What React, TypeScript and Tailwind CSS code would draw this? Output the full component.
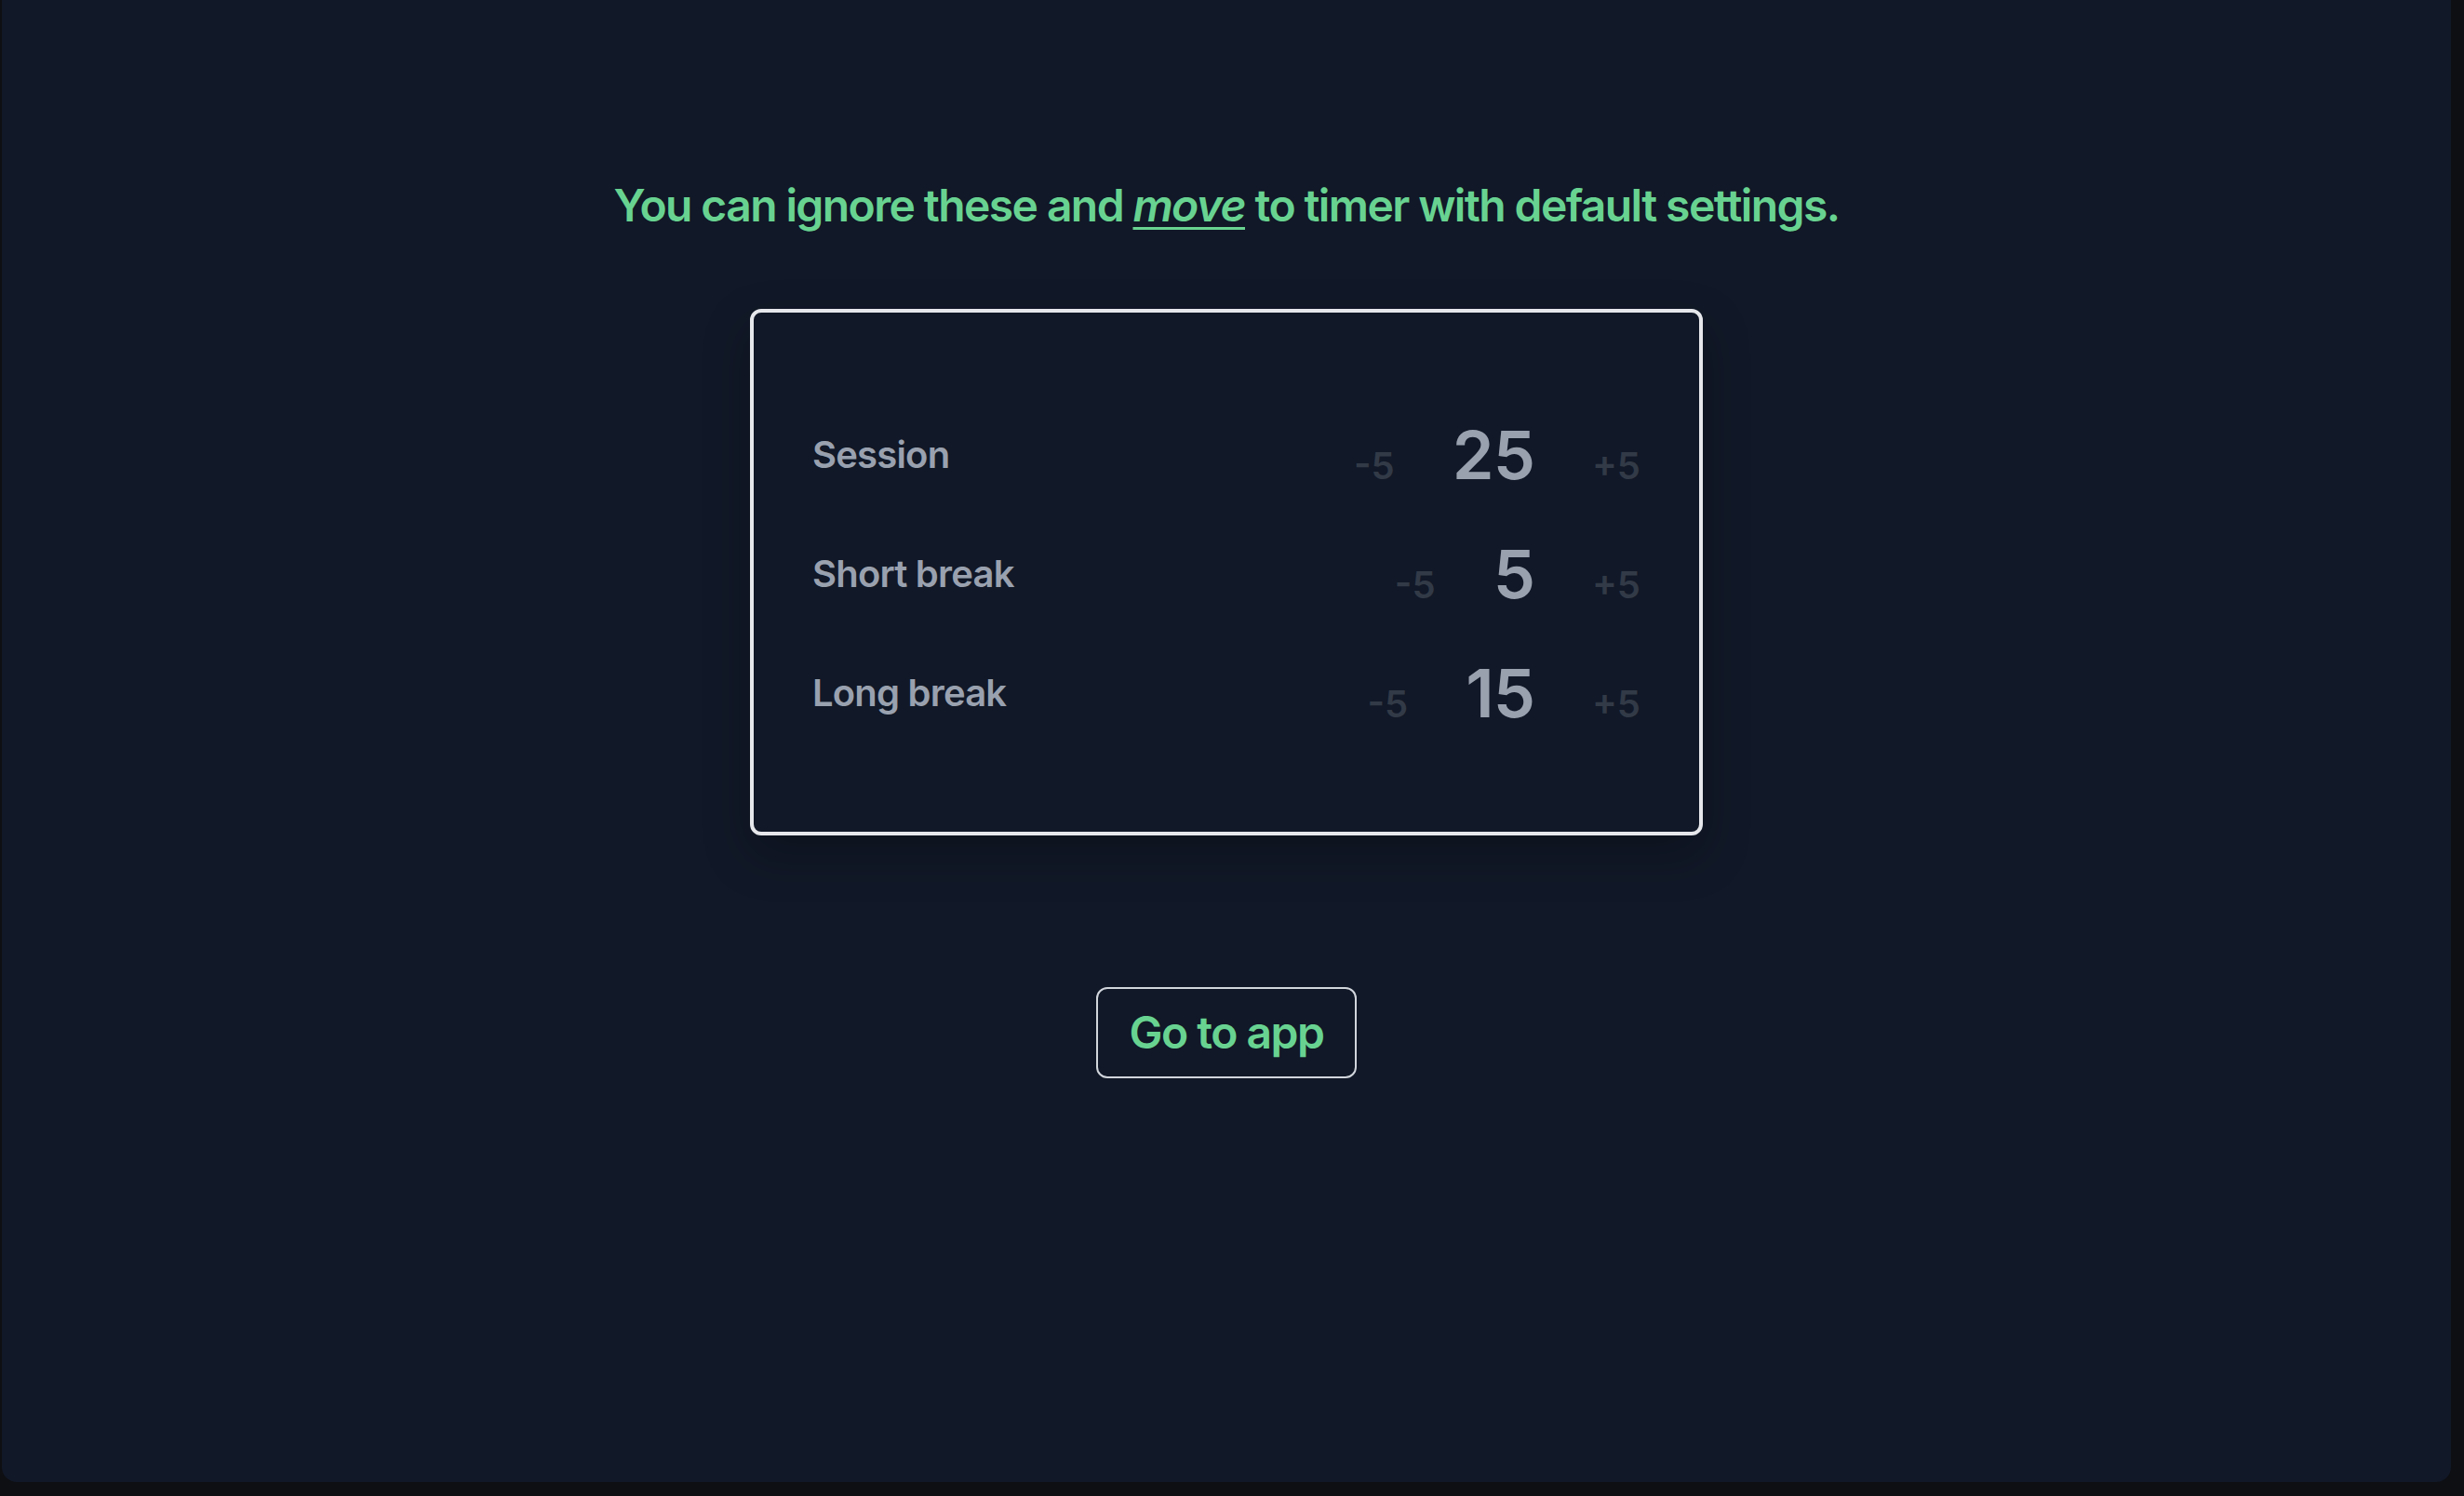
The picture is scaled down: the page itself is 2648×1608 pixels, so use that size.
import React from 'react';

const rows = [
  { label: 'Session', value: 25 },
  { label: 'Short break', value: 5 },
  { label: 'Long break', value: 15 },
];

function SettingRow({ label, value }: { label: string; value: number }) {
  return (
    <div className="flex h-[128px] items-center justify-between">
      <span className="text-[40px] font-semibold leading-[56px] tracking-[-0.8px] text-gray-400">{label}</span>
      <div className="flex items-baseline gap-[62px]">
        <button className="text-[40px] font-semibold leading-[56px] text-[#323a47]">-5</button>
        <span className="text-7xl font-semibold leading-[80px] tracking-[-1px] text-gray-400">{value}</span>
        <button className="text-[40px] font-semibold leading-[56px] text-[#323a47]">+5</button>
      </div>
    </div>
  );
}

export default function App() {
  return (
    <div className="min-h-screen bg-[#0e0f12] pb-[15px] pl-[2px] pr-[14px] font-['Inter','Noto_Sans',sans-serif]">
      <div className="flex h-[1593px] flex-col items-center rounded-b-[16px] bg-[#111827]">
        {/* Heading */}
        <h1 className="mt-[197px] text-5xl leading-none font-semibold tracking-[-1.6px] text-[#68d391]">
          You can ignore these and{' '}
          <a href="#" className="italic underline decoration-[3px] underline-offset-[6px]">
            move
          </a>{' '}
          to timer with default settings.
        </h1>

        {/* Settings card */}
        <div className="mt-[87px] w-[1024px] rounded-[12px] border-4 border-gray-200 pt-[89px] pb-[85px] px-[63px] shadow-[0_20px_50px_rgba(0,0,0,0.25)]">
          {rows.map((r) => (
            <SettingRow key={r.label} label={r.label} value={r.value} />
          ))}
        </div>

        {/* Go to app */}
        <button className="mt-[163px] rounded-[12px] border-2 border-gray-300 px-[33px] py-[15px] text-5xl leading-[64px] font-semibold tracking-[-1.5px] text-[#68d391]">
          Go to app
        </button>
      </div>
    </div>
  );
}
